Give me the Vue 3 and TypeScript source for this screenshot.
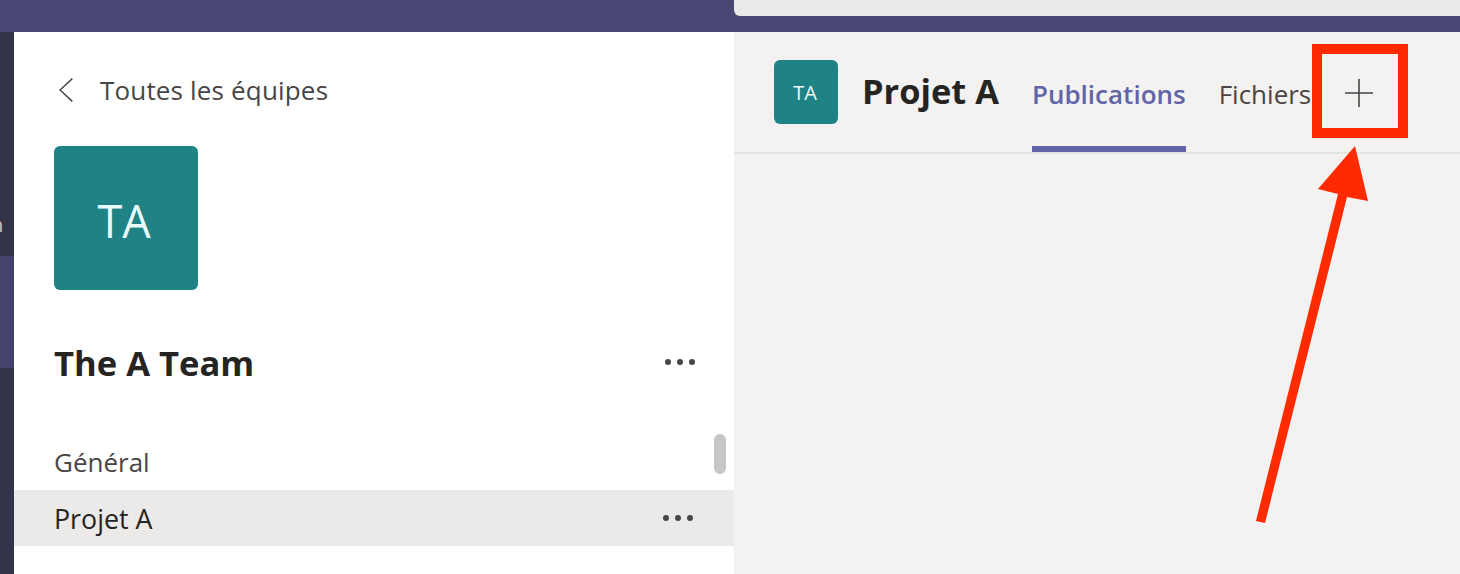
<script setup lang="ts">
const dots: number[] = [1, 2, 3]
</script>

<template>
  <div class="page">
    <header class="topbar">
      <div class="search"></div>
    </header>
    <div class="body">
      <nav class="rail">
        <div class="rail-top"><span class="rail-letter">n</span></div>
        <div class="rail-active"></div>
        <div class="rail-bottom"></div>
      </nav>
      <aside class="side">
        <div class="back">
          <svg class="chev" width="14" height="24" viewBox="0 0 14 24">
            <path d="M13.3 0.6 L1 12 L13.3 23.4" fill="none" stroke="#484644" stroke-width="1.5" />
          </svg>
          <span class="back-label">Toutes les équipes</span>
        </div>
        <div class="tile-lg">TA</div>
        <div class="team">
          <span class="team-name">The A Team</span>
          <span class="dots"><i v-for="d in dots" :key="d"></i></span>
        </div>
        <div class="channels">
          <div class="scroll"></div>
          <div class="channel">Général</div>
          <div class="channel selected">
            <span class="sel-label">Projet A</span>
            <span class="dots"><i v-for="d in dots" :key="d"></i></span>
          </div>
        </div>
      </aside>
      <main class="main">
        <div class="head">
          <div class="tile-sm">TA</div>
          <h1 class="title">Projet A</h1>
          <div class="tab active">Publications</div>
          <div class="tab">Fichiers</div>
          <svg class="plus" width="28" height="28" viewBox="0 0 28 28">
            <path d="M0 14 H28 M14 0 V28" stroke="#484644" stroke-width="1.6" fill="none" />
          </svg>
        </div>
      </main>
    </div>
    <div class="callout"></div>
    <svg class="arrow" width="1460" height="574" viewBox="0 0 1460 574">
      <polygon points="1355,146 1368,201 1347,197 1265,523 1256,521 1338,194 1318,189" fill="#ff2a00" />
    </svg>
  </div>
</template>

<style>
html, body { margin: 0; padding: 0; background: #fff; overflow: hidden; }
</style>

<style scoped>
.page {
  position: relative;
  width: 1460px;
  height: 574px;
  overflow: hidden;
  display: flex;
  flex-direction: column;
  font-family: "Open Sans", "Noto Sans", sans-serif;
}
.topbar {
  height: 32px;
  flex: none;
  background: #4a4774;
  padding-left: 734px;
  box-sizing: border-box;
}
.search {
  height: 16px;
  background: #ebeae9;
  border-bottom-left-radius: 6px;
}
.body { flex: 1; display: flex; min-height: 0; }
.rail {
  width: 14px;
  flex: none;
  display: flex;
  flex-direction: column;
  background: #33344a;
}
.rail-top { height: 224px; position: relative; overflow: hidden; }
.rail-letter {
  position: absolute;
  left: -9px;
  top: 183px;
  font-size: 20px;
  color: #c8c6d0;
  line-height: 20px;
}
.rail-active { height: 112px; background: #45436c; }
.rail-bottom { flex: 1; }
.side {
  width: 720px;
  flex: none;
  background: #fff;
  display: flex;
  flex-direction: column;
}
.back {
  display: flex;
  align-items: center;
  height: 36px;
  margin-top: 40px;
  padding-left: 45px;
  gap: 27px;
  font-size: 26px;
  color: #484644;
  white-space: nowrap;
}
.back-label { letter-spacing: 0.17px; }
.chev { flex: none; }
.tile-lg {
  width: 144px;
  height: 144px;
  margin: 38px 0 0 40px;
  border-radius: 6px;
  background: #1f8284;
  color: #eafafa;
  font-size: 45px;
  font-weight: 400;
  display: flex;
  align-items: center;
  justify-content: center;
  padding: 4px 4px 0 0;
  box-sizing: border-box;
}
.team {
  display: flex;
  align-items: center;
  justify-content: space-between;
  height: 44px;
  margin-top: 50px;
  padding: 0 39px 0 40px;
}
.team-name { font-size: 34.6px; font-weight: 700; color: #252423; white-space: nowrap; }
.dots { display: flex; gap: 6px; }
.dots i { width: 6px; height: 6px; border-radius: 50%; background: #484644; display: block; }
.channels { position: relative; margin-top: 50px; }
.scroll {
  position: absolute;
  right: 8px;
  top: 0;
  width: 12px;
  height: 40px;
  border-radius: 6px;
  background: #c8c6c4;
}
.channel {
  height: 56px;
  display: flex;
  align-items: center;
  justify-content: space-between;
  padding: 0 41px 0 40px;
  font-size: 26px;
  color: #484644;
  box-sizing: border-box;
}
.selected { background: #ebeae8; color: #252423; }
.sel-label { font-size: 26.8px; }
.main { flex: 1; background: #f3f2f1; min-width: 0; }
.head {
  height: 122px;
  box-sizing: border-box;
  border-bottom: 2px solid #e6e5e4;
  display: flex;
  align-items: flex-start;
  padding-left: 40px;
}
.tile-sm {
  width: 64px;
  height: 64px;
  margin-top: 28px;
  border-radius: 6px;
  background: #1f8284;
  color: #eafafa;
  font-size: 20px;
  display: flex;
  align-items: center;
  justify-content: center;
  flex: none;
  padding-right: 2px;
  box-sizing: border-box;
}
.title {
  margin: 37px 0 0 24px;
  font-size: 34.4px;
  line-height: 44px;
  font-weight: 700;
  color: #252423;
  white-space: nowrap;
}
.tab {
  margin: 0;
  height: 120px;
  padding-top: 42px;
  box-sizing: border-box;
  font-size: 26px;
  line-height: 40px;
  color: #484644;
  white-space: nowrap;
}
.tab.active {
  margin-left: 33px;
  margin-right: 33px;
  color: #6264a7;
  font-weight: 600;
  border-bottom: 6px solid #6264a7;
}
.plus { flex: none; margin: 47px 0 0 34px; }
.callout {
  position: absolute;
  left: 1312px;
  top: 44px;
  width: 96px;
  height: 94px;
  box-sizing: border-box;
  border: 10px solid #ff2a00;
}
.arrow { position: absolute; left: 0; top: 0; pointer-events: none; }
</style>
